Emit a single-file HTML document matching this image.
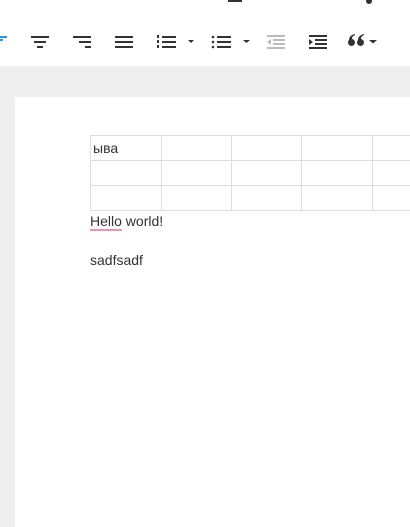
<!DOCTYPE html>
<html><head><style>
body{margin:0;width:410px;height:523px;overflow:hidden;background:#eeeeee;font-family:"Liberation Sans","Noto Sans CJK SC",sans-serif;position:relative}
.tb{position:absolute;left:0;top:0;width:410px;height:66px;background:#fff}
.page{position:absolute;left:15px;top:97px;width:400px;height:430px;background:#fff}
table{position:absolute;left:75px;top:38px;border-collapse:collapse;table-layout:fixed;width:360px}
td{border:1px solid #ddd;height:24px;padding:0 2px;font-size:14px;color:#333;vertical-align:middle;overflow:hidden}
.t{position:absolute;left:75px;font-size:14px;color:#333}
</style></head><body>
<div class="tb">
<svg width="410" height="66" style="position:absolute;left:0;top:0">
<rect x="228" y="0" width="14" height="2" fill="#333"/>
<circle cx="369" cy="1" r="3" fill="#333"/>
<rect x="0" y="36" width="7" height="2" fill="#1e9cf0"/><rect x="0" y="39" width="3" height="2" fill="#1e9cf0"/>
<g fill="#333">
<rect x="31" y="36" width="18" height="2"/><rect x="34" y="41" width="12" height="2"/><rect x="37" y="46" width="6" height="2"/>
<rect x="73" y="36" width="18" height="2"/><rect x="79" y="41" width="12" height="2"/><rect x="85" y="46" width="6" height="2"/>
<rect x="115" y="36" width="18" height="2"/><rect x="115" y="41" width="18" height="2"/><rect x="115" y="46" width="18" height="2"/>
<rect x="162" y="36" width="14" height="2"/><rect x="162" y="41" width="14" height="2"/><rect x="162" y="46" width="14" height="2"/>
<rect x="157" y="35" width="2" height="3"/><rect x="157" y="40" width="2" height="3"/><rect x="157" y="45" width="2" height="3"/>
<path d="M188 40h6l-3 3z"/>
<rect x="217" y="36" width="14" height="2"/><rect x="217" y="41" width="14" height="2"/><rect x="217" y="46" width="14" height="2"/>
<circle cx="213" cy="37" r="1.3"/><circle cx="213" cy="42" r="1.3"/><circle cx="213" cy="47" r="1.3"/>
<path d="M243 40h7l-3.5 3z"/>
<rect x="309" y="35" width="18" height="2"/><rect x="315" y="39" width="12" height="2"/><rect x="315" y="43" width="12" height="2"/><rect x="309" y="47" width="18" height="2"/><path d="M309 39l4 3-4 3z"/>
<path d="M349 40a3.5 3.5 0 1 0 3 -1c0-2 1-3 3-4v-1c-4 1-6 3-6 6z"/><path d="M358 40a3.5 3.5 0 1 0 3 -1c0-2 1-3 3-4v-1c-4 1-6 3-6 6z"/>
<path d="M369 40h8l-4 3.5z"/>
</g>
<g fill="#bbb"><rect x="267" y="35" width="18" height="2"/><rect x="273" y="39" width="12" height="2"/><rect x="273" y="43" width="12" height="2"/><rect x="267" y="47" width="18" height="2"/><path d="M271 39l-4 3 4 3z"/></g>
</svg>
</div>
<div class="page">
<table><colgroup><col style="width:71px"><col style="width:70px"><col style="width:70px"><col style="width:71px"><col style="width:78px"></colgroup>
<tr><td>ыва</td><td></td><td></td><td></td><td></td></tr><tr><td></td><td></td><td></td><td></td><td></td></tr><tr><td></td><td></td><td></td><td></td><td></td></tr></table>
<div class="t" style="top:116px">Hello world!</div>
<div style="position:absolute;left:75px;top:132px;width:32px;height:2px;background:#f48fb1"></div>
<div class="t" style="top:155px">sadfsadf</div>
</div>
</body></html>
